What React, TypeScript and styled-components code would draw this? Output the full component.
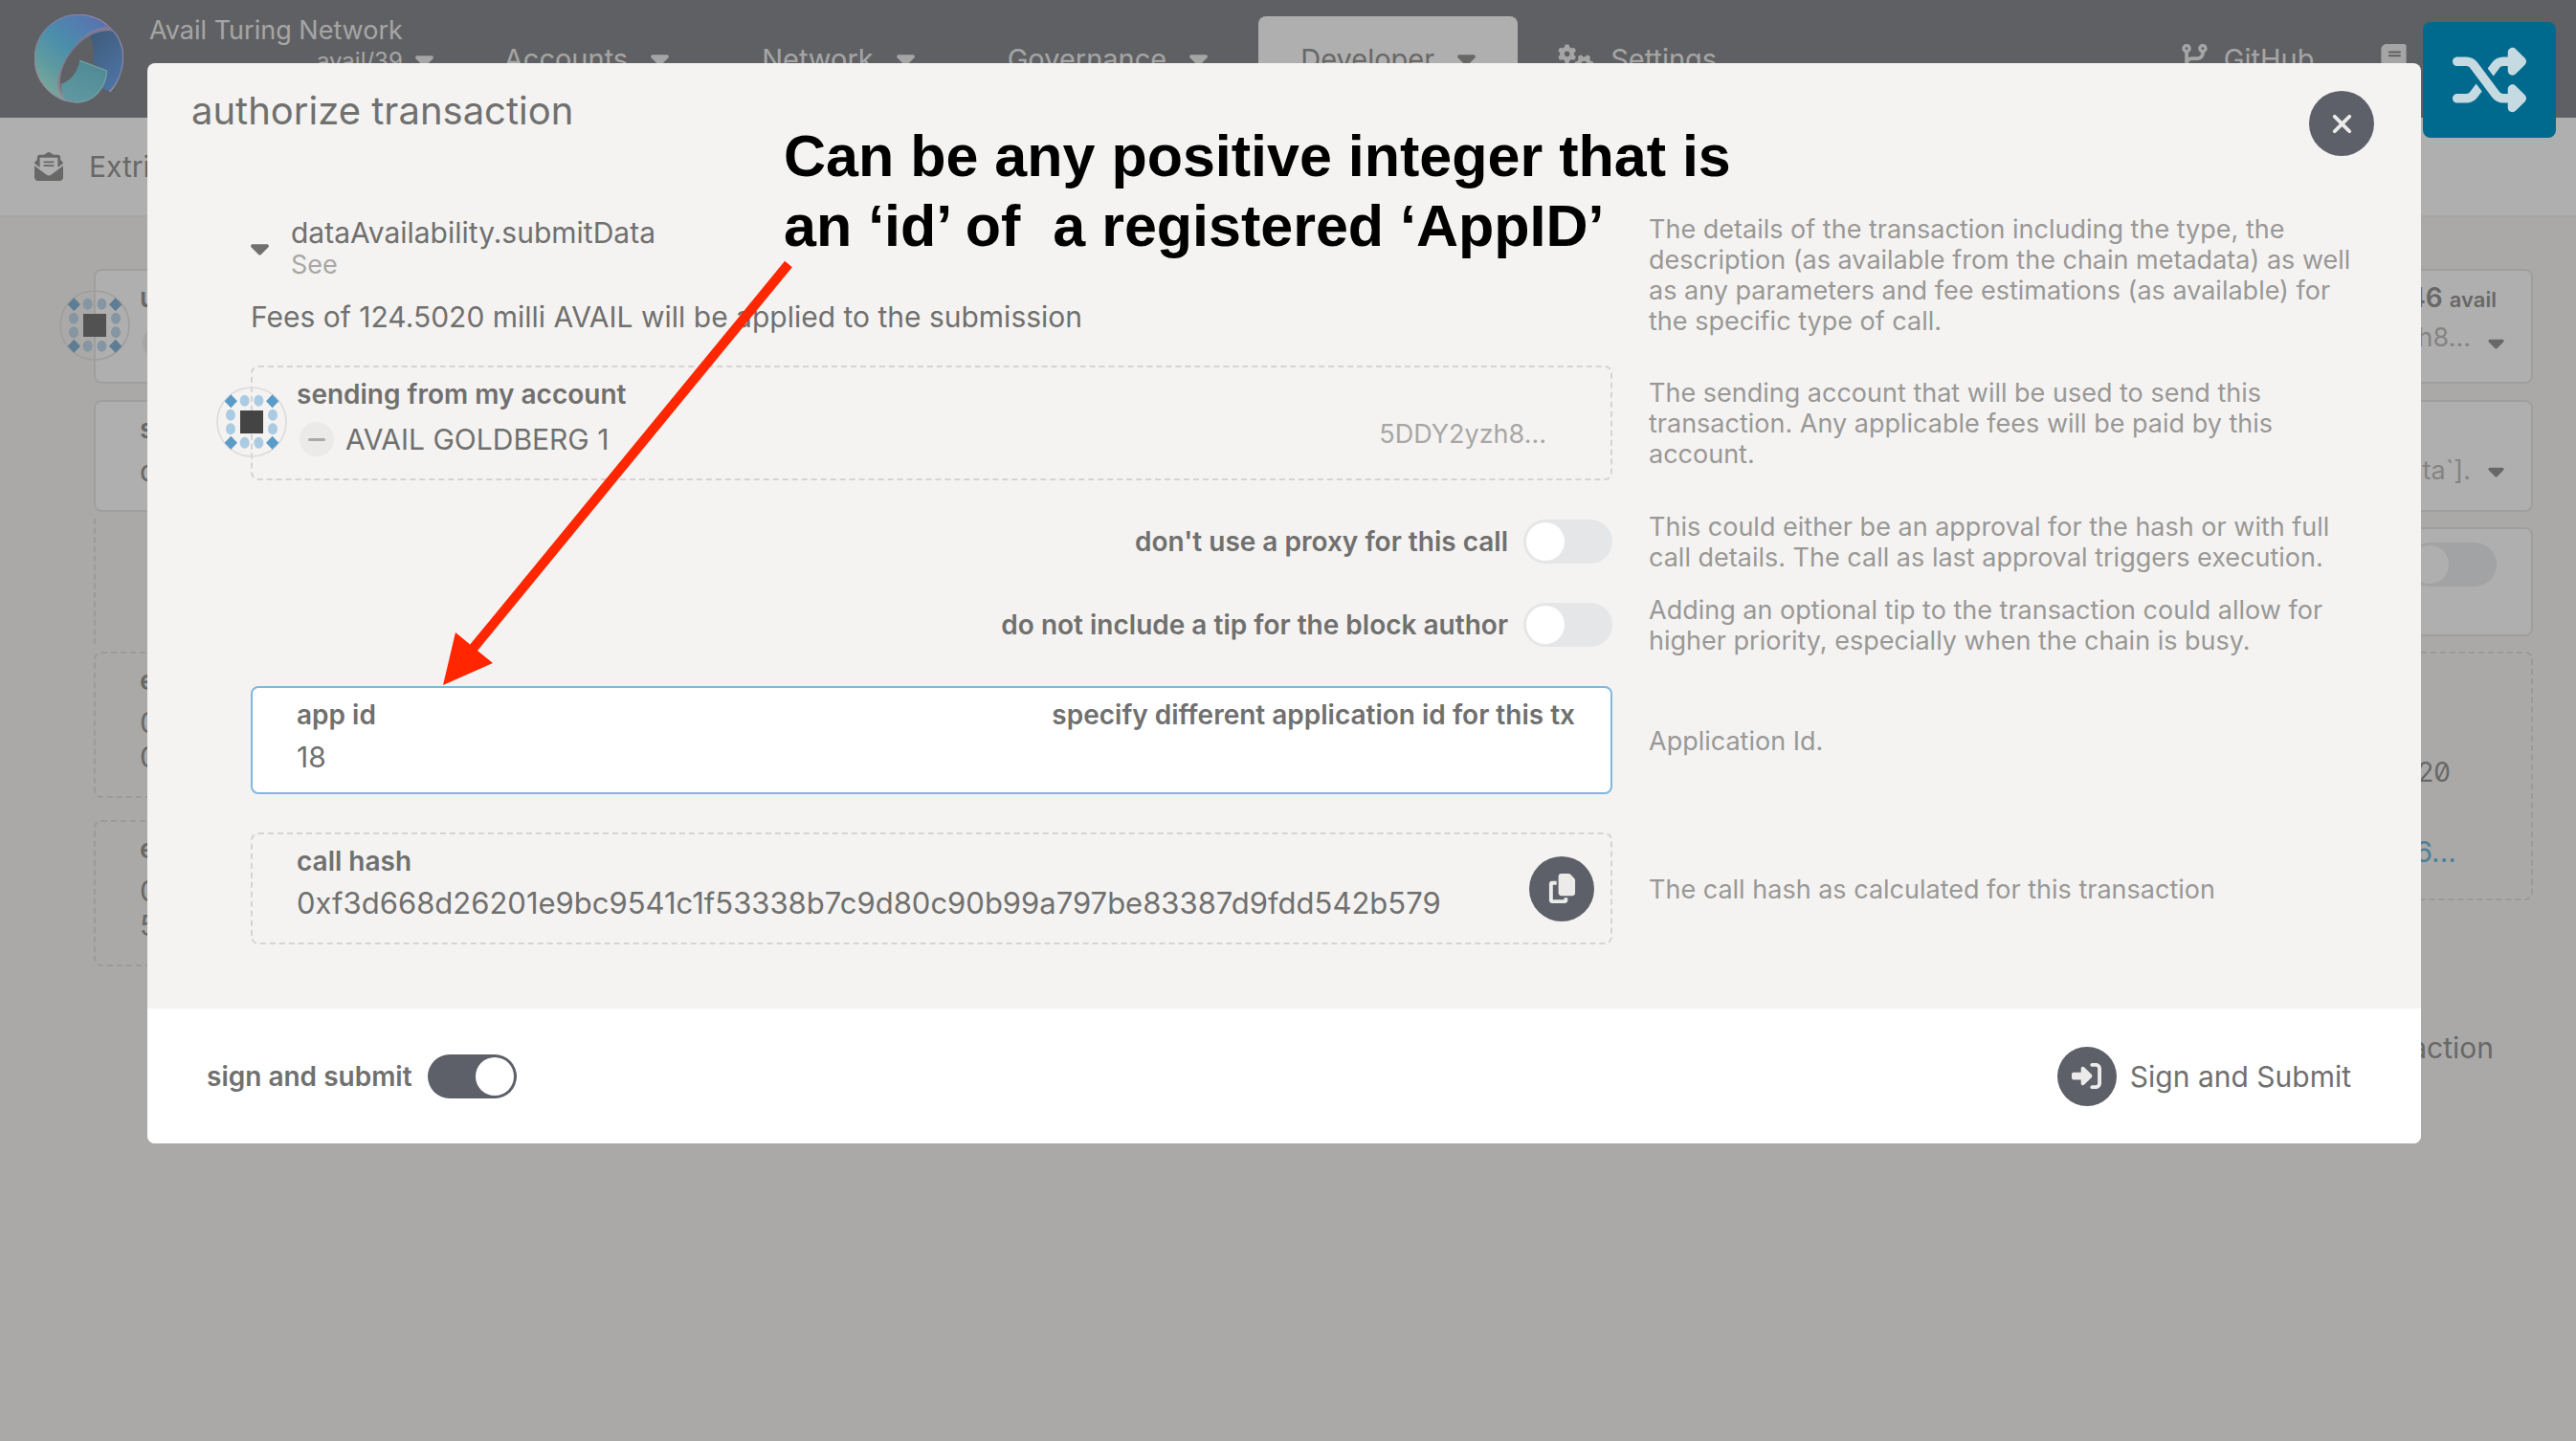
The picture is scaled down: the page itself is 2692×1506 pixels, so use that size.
import React, { useState } from 'react';
import styled, { createGlobalStyle, css } from 'styled-components';
import {
  FaBook,
  FaCaretDown,
  FaCodeBranch,
  FaCopy,
  FaEnvelopeOpenText,
  FaGears,
  FaRightToBracket,
  FaShuffle,
  FaXmark,
} from 'react-icons/fa6';

const color = {
  page: '#f4f3f1',
  header: '#5e6066',
  accent: '#5d6068',
  text: '#70706f',
  help: '#999896',
  faint: '#a8a7a5',
  border: '#dfdedc',
  dashed: '#d5d4d2',
  focus: '#80b7df',
  link: '#3f9fd0',
};

const GlobalStyle = createGlobalStyle`
  *, *::before, *::after { box-sizing: border-box; }
  body {
    margin: 0;
    background: ${color.page};
    color: ${color.text};
    font: 400 30px/36px Inter, "Open Sans", sans-serif;
  }
  button, input { font: inherit; color: inherit; }
  h1, p { margin: 0; font-weight: inherit; }
`;

/* ---------- shared parts ---------- */

const Label = styled.span`
  display: block;
  font-size: 28px;
  font-weight: 600;
  line-height: 34px;
`;

const Caret = styled(FaCaretDown)`
  flex: none;
  width: 19px;
  height: 30px;
`;

const Box = styled.div<{ $kind?: 'solid' | 'dashed' | 'focus' }>`
  position: relative;
  border: 2px solid ${color.border};
  border-radius: 8px;
  padding: 11px 28px 23px 46px;
  background: #fff;
  ${(p) => p.$kind === 'dashed' && css`
    border: 2px dashed ${color.dashed};
    background: transparent;
  `}
  ${(p) => p.$kind === 'focus' && css`
    border-color: ${color.focus};
    padding-bottom: 19px;
  `}
`;

const Split = styled.div<{ $inset?: number }>`
  display: flex;
  justify-content: space-between;
  padding-right: ${(p) => p.$inset ?? 0}px;
`;

const AccountRow = styled.div<{ $inset?: number }>`
  display: flex;
  align-items: flex-start;
  gap: 12px;
  margin-top: 12px;
  padding: 0 ${(p) => p.$inset ?? 0}px 0 3px;
`;

const AccountName = styled.span`
  flex: 1;
`;

const Address = styled.span`
  color: ${color.faint};
  font-size: 27px;
  line-height: 26px;
`;

const Value = styled.div`
  margin-top: 9px;
`;

const HashValue = styled(Value)`
  font-size: 31px;
  overflow-wrap: anywhere;
`;

const Minus = styled.span`
  display: flex;
  align-items: center;
  justify-content: center;
  width: 36px;
  height: 36px;
  border-radius: 50%;
  background: #ebeae9;
  &::before {
    content: '';
    width: 18px;
    height: 3px;
    border-radius: 2px;
    background: #aaa9a8;
  }
`;

const IdenticonSvg = styled.svg`
  position: absolute;
  left: -38px;
  top: 20px;
  width: 74px;
  height: 74px;
`;

const ToggleLabel = styled.label`
  display: inline-flex;
  align-items: center;
  gap: 16px;
  font-size: 28px;
  font-weight: 600;
  line-height: 34px;
`;

const Switch = styled.input`
  appearance: none;
  flex: none;
  width: 93px;
  height: 46px;
  margin: 0;
  padding: 3px;
  border-radius: 23px;
  background: #e4e6e8;
  display: flex;
  &::before {
    content: '';
    width: 40px;
    height: 40px;
    border-radius: 50%;
    background: #fff;
  }
  &:checked {
    background: ${color.accent};
    justify-content: flex-end;
  }
`;

const RoundButton = styled.button`
  flex: none;
  display: flex;
  align-items: center;
  justify-content: center;
  width: 68px;
  height: 68px;
  border: 0;
  border-radius: 50%;
  padding: 0;
  background: ${color.accent};
  color: #ecebea;
  font-size: 31px;
`;

function Identicon() {
  const dots = [[89, 44], [133, 44], [45, 89], [177, 89], [45, 133], [177, 133], [89, 176], [133, 176]];
  const diamonds = [[46, 46], [176, 46], [46, 176], [176, 176]];
  return (
    <IdenticonSvg viewBox="0 0 222 222" aria-hidden="true">
      <circle cx="111" cy="111" r="108" fill="none" stroke="#dddcdb" strokeWidth="5" />
      {dots.map(([x, y]) => (
        <ellipse key={`${x}-${y}`} cx={x} cy={y} rx="15" ry="18" fill="#abcbe3" />
      ))}
      {diamonds.map(([x, y]) => (
        <path key={`${x}-${y}`} d={`M${x} ${y - 21}l20 21l-20 21l-20-21z`} fill="#5a9bc8" />
      ))}
      <rect x="75" y="75" width="72" height="72" fill="#444" />
    </IdenticonSvg>
  );
}

/* ---------- page behind the dialog ---------- */

const Header = styled.header`
  display: flex;
  height: 123px;
  padding: 0 101px 0 36px;
  background: ${color.header};
  color: #eaeaea;
`;

const Brand = styled.div`
  display: flex;
  margin-right: 30px;
`;

const LogoSvg = styled.svg`
  width: 93px;
  height: 93px;
  margin: 15px 27px 0 0;
`;

const ChainInfo = styled.div`
  padding-top: 16px;
  font-size: 27px;
  line-height: 32px;
  text-align: right;
`;

const Version = styled.div`
  font-size: 24px;
`;

const BrandCaret = styled.span`
  display: flex;
  align-items: center;
  height: 123px;
  padding-left: 13px;
`;

const Nav = styled.nav`
  display: flex;
  gap: 9px;
`;

const NavLink = styled.a<{ $active?: boolean; $side?: number }>`
  display: flex;
  align-items: flex-start;
  gap: ${(p) => (p.$side ? 17 : 24)}px;
  margin-top: 17px;
  padding: 24px ${(p) => p.$side ?? 44}px 0;
  border-radius: 8px 8px 0 0;
  font-size: 29px;
  line-height: 42px;
  color: inherit;
  text-decoration: none;
  svg {
    flex: none;
    height: 30px;
    margin-top: 5px;
  }
  ${(p) => p.$active && css`
    background: #fff;
    color: ${color.text};
  `}
`;

const SettingsIcon = styled(FaGears)`
  width: 38px;
`;

const GitIcon = styled(FaCodeBranch)`
  width: 27px;
`;

const WikiIcon = styled(FaBook)`
  width: 27px;
`;

const ExternalNav = styled.nav`
  display: flex;
  margin-left: auto;
  margin-right: -35px;
`;

const SubHeader = styled.div`
  display: flex;
  height: 104px;
  padding-left: 36px;
  align-items: center;
  gap: 27px;
  background: #fff;
  border-bottom: 2px solid #eeedeb;
`;

const Main = styled.main`
  display: grid;
  gap: 17px;
  padding: 54px 45px 0 98px;
`;

const Balance = styled(Label)`
  small {
    font-size: 22px;
    line-height: 22px;
  }
`;

const SelectedRow = styled(Split)`
  margin-top: 9px;
`;

const DropHint = styled.span`
  display: flex;
  gap: 18px;
  color: ${color.faint};
  font-size: 27px;
  svg {
    width: 17px;
    height: 26px;
    margin-top: 5px;
    color: ${color.text};
  }
`;

const Params = styled.div`
  margin-top: -10px;
  padding: 9px 0 8px 80px;
  border-left: 2px dashed ${color.dashed};
`;

const ParamBox = styled(Box)`
  display: flex;
  justify-content: flex-end;
  padding: 14px 36px 50px;
`;

const Outputs = styled.div`
  display: grid;
  grid-template-columns: 2fr 1fr;
  align-items: start;
  gap: 18px;
  margin-top: -9px;
`;

const OutputColumn = styled.div`
  display: grid;
  gap: 23px;
`;

const CostBox = styled(Box)`
  display: grid;
  gap: 47px;
  justify-items: end;
  padding: 106px 78px 31px;
  font-size: 28px;
`;

const Cost = styled.span`
  padding-right: 6px;
  font-feature-settings: 'zero';
`;

const DetailLink = styled.a`
  color: ${color.link};
  font-size: 30px;
  text-decoration: none;
`;

const PageActions = styled.div`
  margin-top: 50px;
  padding-right: 41px;
  text-align: right;
`;

function Logo() {
  return (
    <LogoSvg viewBox="48 45 279 279" aria-label="Avail">
      <defs>
        <linearGradient id="ringFront" x1="0.75" y1="0" x2="0.15" y2="0.85">
          <stop offset="0" stopColor="#5088ff" />
          <stop offset="0.45" stopColor="#36bcf8" />
          <stop offset="0.75" stopColor="#5ad4e0" />
          <stop offset="1" stopColor="#8fecd8" />
        </linearGradient>
        <linearGradient id="ringBack" x1="0" y1="0" x2="0.5" y2="1">
          <stop offset="0" stopColor="#1c5490" />
          <stop offset="1" stopColor="#3a86e6" />
        </linearGradient>
        <linearGradient id="ringTail" x1="0.6" y1="0" x2="0.2" y2="1">
          <stop offset="0" stopColor="#3fb4c8" />
          <stop offset="1" stopColor="#62d2e4" />
        </linearGradient>
        <linearGradient id="ringEdge" x1="1" y1="0" x2="0" y2="1">
          <stop offset="0" stopColor="#d8a8f4" />
          <stop offset="0.5" stopColor="#7fa4f0" />
          <stop offset="1" stopColor="#f4c0c8" />
        </linearGradient>
      </defs>
      <path d="M222 112C250 92 280 92 298 102C322 130 335 170 322 215C315 245 302 270 284 287L262 277C270 255 275 240 274 222L230 196C236 165 234 135 222 112Z" fill="url(#ringBack)" />
      <path d="M290 92C325 125 332 175 321 216C314 246 302 270 284 287" fill="none" stroke="url(#ringEdge)" strokeWidth="4" />
      <path d="M190 190L275 222C274 270 240 318 180 322C160 322 145 318 135 310L132 264C165 250 184 225 190 190Z" fill="url(#ringTail)" />
      <path d="M190 190L275 222C272 275 235 320 180 321" fill="none" stroke="#84dcec" strokeWidth="4" />
      <path d="M278 84C255 60 225 46 187 46C110 46 49 108 49 184C49 245 88 300 146 318C122 295 116 262 124 235C145 165 205 92 278 84Z" fill="url(#ringFront)" />
      <path d="M294 98C240 88 175 130 140 205C120 250 130 292 148 319C125 305 112 270 122 235C145 165 205 85 278 84Z" fill="url(#ringEdge)" opacity="0.7" />
      <path d="M290 92C262 62 225 46 187 46C110 46 49 108 49 184C49 250 95 312 180 322" fill="none" stroke="url(#ringEdge)" strokeWidth="4" />
    </LogoSvg>
  );
}

function ExtrinsicsPage() {
  return (
    <>
      <Header>
        <Brand>
          <Logo />
          <ChainInfo>
            <div>Avail Turing Network</div>
            <Version>avail/39</Version>
          </ChainInfo>
          <BrandCaret><Caret /></BrandCaret>
        </Brand>
        <Nav>
          <NavLink href="#accounts">Accounts <Caret /></NavLink>
          <NavLink href="#network">Network <Caret /></NavLink>
          <NavLink href="#governance">Governance <Caret /></NavLink>
          <NavLink href="#developer" $active>Developer <Caret /></NavLink>
          <NavLink href="#settings" $side={33}><SettingsIcon /> Settings</NavLink>
        </Nav>
        <ExternalNav>
          <NavLink href="#github" $side={35}><GitIcon /> GitHub</NavLink>
          <NavLink href="#wiki" $side={35}><WikiIcon /> Wiki</NavLink>
        </ExternalNav>
      </Header>
      <SubHeader><FaEnvelopeOpenText /> Extrinsics</SubHeader>
      <Main>
        <Box>
          <Identicon />
          <Split $inset={8}>
            <Label>using</Label>
            <Balance>46 <small>avail</small></Balance>
          </Split>
          <AccountRow>
            <Minus />
            <AccountName />
            <DropHint><Address>yzh8...</Address><Caret /></DropHint>
          </AccountRow>
        </Box>
        <Box>
          <Label>submit</Label>
          <SelectedRow>
            <span>data</span>
            <DropHint>[`submitData`]. <Caret /></DropHint>
          </SelectedRow>
        </Box>
        <Params>
          <ParamBox>
            <Switch type="checkbox" aria-label="file upload" />
          </ParamBox>
        </Params>
        <Outputs>
          <OutputColumn>
            <Box $kind="dashed">
              <Label>encoded</Label>
              <Value>0x<br />0x</Value>
            </Box>
            <Box $kind="dashed">
              <Label>encoded</Label>
              <Value>0x<br />5</Value>
            </Box>
          </OutputColumn>
          <CostBox $kind="dashed">
            <Cost>20</Cost>
            <DetailLink href="#details">6...</DetailLink>
          </CostBox>
        </Outputs>
        <PageActions>Transaction</PageActions>
      </Main>
    </>
  );
}

/* ---------- dialog ---------- */

const Overlay = styled.div`
  position: fixed;
  inset: 0;
  padding: 66px 162px 0 154px;
  background: rgba(96, 96, 96, 0.5);
`;

const Dialog = styled.section`
  position: relative;
  border-radius: 8px;
  background: ${color.page};
`;

const DialogHeader = styled.div`
  display: flex;
  justify-content: space-between;
  padding: 29px 49px 0 46px;
`;

const DialogTitle = styled.h1`
  font-size: 40px;
  line-height: 42px;
`;

const DialogBody = styled.div`
  padding: 59px 59px 67px 108px;
`;

const Row = styled.div<{ $gap?: number }>`
  display: grid;
  grid-template-columns: 1423fr 748fr;
  column-gap: 38px;
  align-items: center;
  margin-top: ${(p) => p.$gap ?? 0}px;
`;

const Help = styled.p`
  padding-top: 2px;
  color: ${color.help};
  font-size: 27px;
  line-height: 32px;
`;

const CallSummary = styled.div`
  display: flex;
  align-items: center;
  gap: 23px;
`;

const CallDoc = styled.div`
  color: ${color.faint};
  font-size: 27px;
  line-height: 32px;
`;

const Fees = styled.p`
  margin-top: 20px;
`;

const Right = styled.div`
  display: flex;
  justify-content: flex-end;
`;

const AppIdInput = styled.input`
  display: block;
  width: 100%;
  height: 36px;
  margin-top: 9px;
  padding: 0;
  border: 0;
  outline: 0;
  background: transparent;
`;

const CopyBox = styled(Box)`
  display: flex;
  align-items: center;
  justify-content: space-between;
  padding: 0 17px 0 46px;
`;

const CopyText = styled.div`
  padding: 11px 0 23px;
`;

const DialogFooter = styled.div`
  display: flex;
  align-items: center;
  justify-content: space-between;
  height: 141px;
  padding: 0 73px 0 62px;
  border-radius: 0 0 8px 8px;
  background: #fff;
`;

const SubmitButton = styled.button`
  display: flex;
  align-items: center;
  gap: 14px;
  padding: 0;
  border: 0;
  background: transparent;
`;

const SubmitIcon = styled.span`
  display: flex;
  align-items: center;
  justify-content: center;
  width: 62px;
  height: 62px;
  border-radius: 50%;
  background: ${color.accent};
  color: #ecebea;
  font-size: 31px;
`;

const Note = styled.p`
  position: absolute;
  left: 665px;
  top: 61px;
  color: #000;
  font: 700 61px/73px "Liberation Sans", Arial, sans-serif;
  white-space: pre;
`;

const NoteArrow = styled.svg`
  position: absolute;
  left: 306px;
  top: 204px;
  width: 372px;
  height: 450px;
  pointer-events: none;
`;

const ShuffleButton = styled.button`
  position: fixed;
  top: 23px;
  right: 21px;
  display: flex;
  align-items: center;
  justify-content: center;
  width: 139px;
  height: 121px;
  border: 0;
  border-radius: 8px;
  padding: 0;
  background: #006a8e;
  color: #c6dae2;
  font-size: 77px;
`;

export default function App() {
  const [appId, setAppId] = useState('18');
  return (
    <>
      <GlobalStyle />
      <ExtrinsicsPage />
      <Overlay>
        <Dialog role="dialog" aria-labelledby="dialog-title">
          <DialogHeader>
            <DialogTitle id="dialog-title">authorize transaction</DialogTitle>
            <RoundButton aria-label="Close"><FaXmark /></RoundButton>
          </DialogHeader>
          <DialogBody>
            <Row>
              <div>
                <CallSummary>
                  <Caret />
                  <div>
                    dataAvailability.submitData
                    <CallDoc>See</CallDoc>
                  </div>
                </CallSummary>
                <Fees>Fees of 124.5020 milli AVAIL will be applied to the submission</Fees>
              </div>
              <Help>
                The details of the transaction including the type, the description (as available from the
                chain metadata) as well as any parameters and fee estimations (as available) for the specific
                type of call.
              </Help>
            </Row>
            <Row $gap={30}>
              <Box $kind="dashed">
                <Identicon />
                <Label>sending from my account</Label>
                <AccountRow $inset={39}>
                  <Minus />
                  <AccountName>AVAIL GOLDBERG 1</AccountName>
                  <Address>5DDY2yzh8...</Address>
                </AccountRow>
              </Box>
              <Help>
                The sending account that will be used to send this transaction. Any applicable fees will be
                paid by this account.
              </Help>
            </Row>
            <Row $gap={31}>
              <Right>
                <ToggleLabel>don't use a proxy for this call<Switch type="checkbox" /></ToggleLabel>
              </Right>
              <Help>
                This could either be an approval for the hash or with full call details. The call as last
                approval triggers execution.
              </Help>
            </Row>
            <Row $gap={21}>
              <Right>
                <ToggleLabel>do not include a tip for the block author<Switch type="checkbox" /></ToggleLabel>
              </Right>
              <Help>
                Adding an optional tip to the transaction could allow for higher priority, especially when
                the chain is busy.
              </Help>
            </Row>
            <Row $gap={31}>
              <Box $kind="focus">
                <Split $inset={9}>
                  <Label as="label" htmlFor="app-id">app id</Label>
                  <Label>specify different application id for this tx</Label>
                </Split>
                <AppIdInput id="app-id" value={appId} onChange={(e) => setAppId(e.target.value)} />
              </Box>
              <Help>Application Id.</Help>
            </Row>
            <Row $gap={40}>
              <CopyBox $kind="dashed">
                <CopyText>
                  <Label>call hash</Label>
                  <HashValue>0xf3d668d26201e9bc9541c1f53338b7c9d80c90b99a797be83387d9fdd542b579</HashValue>
                </CopyText>
                <RoundButton aria-label="Copy call hash"><FaCopy /></RoundButton>
              </CopyBox>
              <Help>The call hash as calculated for this transaction</Help>
            </Row>
          </DialogBody>
          <DialogFooter>
            <ToggleLabel>sign and submit<Switch type="checkbox" defaultChecked /></ToggleLabel>
            <SubmitButton>
              <SubmitIcon><FaRightToBracket /></SubmitIcon>
              Sign and Submit
            </SubmitButton>
          </DialogFooter>
          <Note>{'Can be any positive integer that is\nan ‘id’ of  a registered ‘AppID’'}</Note>
          <NoteArrow viewBox="460 270 372 450" aria-hidden="true">
            <path d="M824 276L490 683" stroke="#ff2600" strokeWidth="10" />
            <path d="M463 716L476 661L515 693Z" fill="#ff2600" />
          </NoteArrow>
        </Dialog>
      </Overlay>
      <ShuffleButton aria-label="Shuffle"><FaShuffle /></ShuffleButton>
    </>
  );
}
